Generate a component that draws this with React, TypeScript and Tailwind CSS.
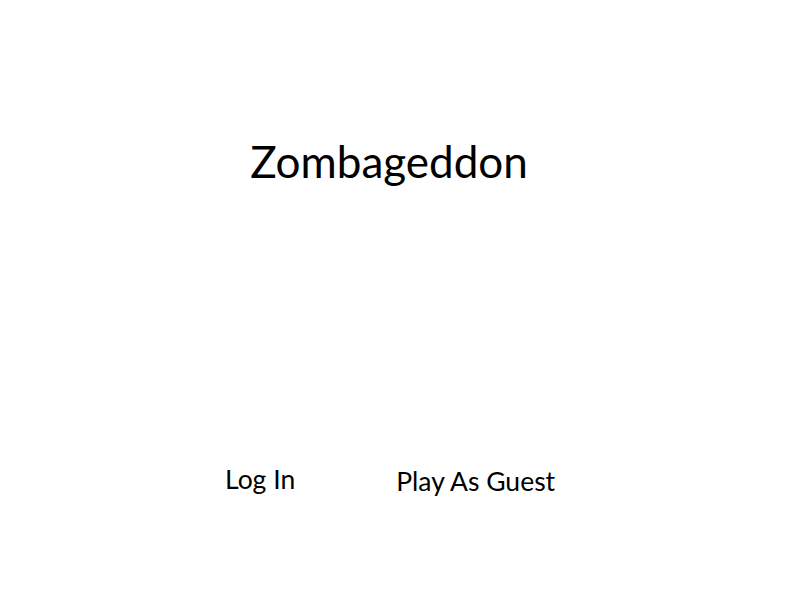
import React from "react";

const font = { fontFamily: '"Lato", "Open Sans", sans-serif' };

export default function App() {
  return (
    <div className="w-[800px] h-[600px] bg-white text-black" style={font}>
      <div className="pt-[133px] flex justify-center">
        <h1 className="ml-[-22px] text-[44px] leading-[56px] font-normal">Zombageddon</h1>
      </div>
      <div className="mt-[275px] flex items-start">
        <button className="ml-[225px] text-[26.5px] leading-[30px]">Log In</button>
        <button className="ml-[101px] mt-[2px] text-[26.5px] leading-[30px]">Play As Guest</button>
      </div>
    </div>
  );
}
